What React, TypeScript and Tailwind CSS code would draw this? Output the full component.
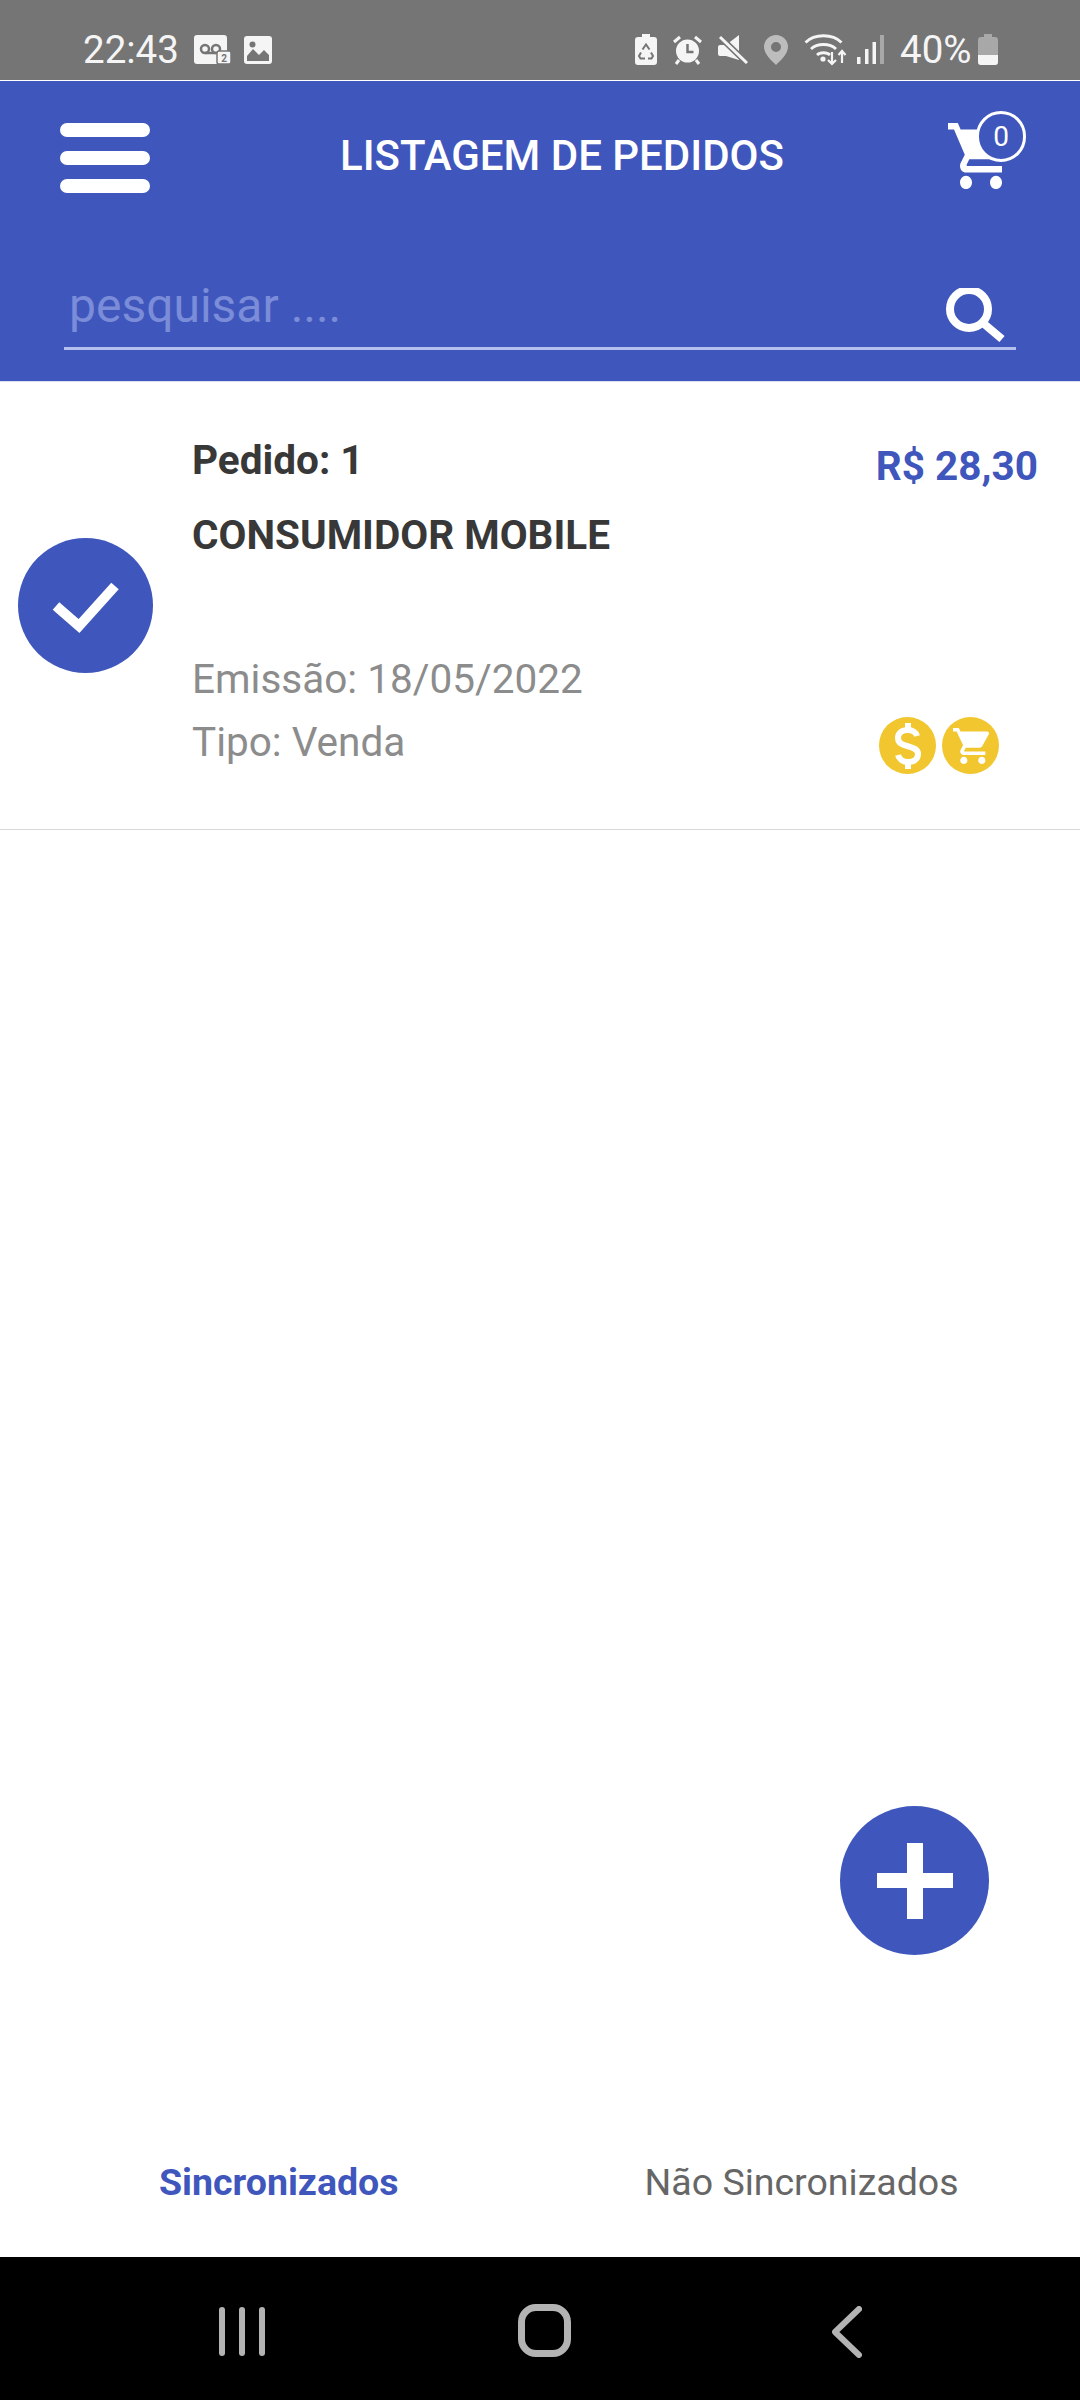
import React from 'react';

const CART_PATH =
  'M7 18c-1.1 0-1.99.9-1.99 2S5.9 22 7 22s2-.9 2-2-.9-2-2-2zM1 2v2h2l3.6 7.59-1.35 2.45c-.16.28-.25.61-.25.96 0 1.1.9 2 2 2h12v-2H7.42c-.14 0-.25-.11-.25-.25l.03-.12.9-1.63h7.45c.75 0 1.41-.41 1.75-1.03l3.58-6.49c.08-.14.12-.31.12-.48 0-.55-.45-1-1-1H5.21l-.94-2H1zm16 16c-1.1 0-1.99.9-1.99 2s.89 2 1.99 2 2-.9 2-2-.9-2-2-2z';

const StatusBar = () => (
  <div className="h-[80px] shrink-0 bg-[#757575] flex items-center pl-[83px] pr-[82px] pt-[19px] text-[#f5f5f5]">
    <span className="text-[38.5px] leading-[40px] font-normal w-[111px]">22:43</span>

    {/* voicemail + badge */}
    <svg width="37" height="29" viewBox="0 0 37 29" className="shrink-0">
      <rect x="0" y="0" width="33" height="29" rx="3" fill="#f5f5f5" />
      <circle cx="11" cy="14" r="4" fill="none" stroke="#757575" strokeWidth="2.5" />
      <circle cx="22" cy="14" r="4" fill="none" stroke="#757575" strokeWidth="2.5" />
      <path d="M11 18h11" stroke="#757575" strokeWidth="2.5" />
      <rect x="23" y="16" width="14" height="13" rx="2" fill="#f5f5f5" stroke="#757575" strokeWidth="1.5" />
      <text x="30" y="27" fontSize="10" fontWeight="700" textAnchor="middle" fill="#757575">2</text>
    </svg>
    <svg width="28" height="28" viewBox="0 0 28 28" className="ml-[13px] shrink-0">
      <rect width="28" height="28" rx="3" fill="#f5f5f5" />
      <circle cx="8.500" cy="8.500" r="3" fill="#757575" />
      <path d="M3 25v-5l6-7 6 6 5-5 5 5v6z" fill="#757575" />
    </svg>

    <div className="ml-auto flex items-center">
      {/* battery care */}
      <svg width="22" height="31" viewBox="0 0 22 31" className="shrink-0">
        <path d="M7 0h8v3h4a3 3 0 0 1 3 3v22a3 3 0 0 1-3 3H3a3 3 0 0 1-3-3V6a3 3 0 0 1 3-3h4z" fill="#f5f5f5" />
        <path d="M7.500 15.500l3.500-5 3.500 5M6 18.500l-2 3.500 1.500 2.500H10M16 18.500l2 3.500-1.500 2.500H13" stroke="#757575" strokeWidth="2" fill="none" />
      </svg>
      {/* alarm */}
      <svg width="29" height="30" viewBox="0 0 29 30" className="ml-[16px] shrink-0">
        <circle cx="14.500" cy="16" r="11.500" fill="#f5f5f5" />
        <path d="M14.500 9v8h6" stroke="#757575" strokeWidth="2.500" fill="none" />
        <path d="M1 7l6-5M28 7l-6-5M6 25l-3 4M23 25l3 4" stroke="#f5f5f5" strokeWidth="3" />
      </svg>
      {/* mute */}
      <svg width="30" height="29" viewBox="0 0 30 29" className="ml-[16px] shrink-0">
        <path d="M0 12a2 2 0 0 1 2-2h6L21 0v25L8 21H2a2 2 0 0 1-2-2z" fill="#f5f5f5" />
        <path d="M0 0l30 29" stroke="#757575" strokeWidth="6" />
        <path d="M2 2l27 26" stroke="#f5f5f5" strokeWidth="3" />
      </svg>
      {/* pin */}
      <svg width="24" height="30" viewBox="0 0 24 30" className="ml-[16px] shrink-0">
        <path
          fillRule="evenodd"
          d="M12 0a12 12 0 0 1 12 12c0 7-8 14-12 18C8 26 0 19 0 12A12 12 0 0 1 12 0zm0 7a5 5 0 1 0 0 10 5 5 0 0 0 0-10z"
          fill="#bdbdbd"
        />
      </svg>
      {/* wifi with arrows */}
      <svg width="43" height="33" viewBox="0 0 43 33" className="ml-[16px] shrink-0">
        <path d="M1.500 9.500c9-9 27-9 36 0M7 16c6-6 19-6 25 0M13 22c3-3 10-3 13 0" fill="none" stroke="#f5f5f5" strokeWidth="2.800" />
        <circle cx="19" cy="26" r="2.600" fill="#f5f5f5" />
        <path d="M28 19v12M24 27l4 4 4-4M38 30V18M34.500 22l3.500-4 3.500 4" fill="none" stroke="#f5f5f5" strokeWidth="2.200" />
      </svg>
      {/* signal */}
      <svg width="27" height="29" viewBox="0 0 27 29" className="ml-[10px] shrink-0">
        <rect x="0" y="22" width="3.500" height="7" fill="#f5f5f5" />
        <rect x="8" y="14" width="3.500" height="15" fill="#f5f5f5" />
        <rect x="15.500" y="7" width="3.500" height="22" fill="#f5f5f5" />
        <rect x="23" y="0" width="4" height="29" fill="#a8a8a8" />
      </svg>
      <span className="ml-[16px] text-[38.5px] leading-[40px] font-normal w-[78px]">40%</span>
      {/* battery */}
      <svg width="20" height="31" viewBox="0 0 20 31" className="shrink-0">
        <path d="M6 0h8v3h3a3 3 0 0 1 3 3v22a3 3 0 0 1-3 3H3a3 3 0 0 1-3-3V6a3 3 0 0 1 3-3h3z" fill="#a8a8a8" />
        <path d="M0 21h20v7a3 3 0 0 1-3 3H3a3 3 0 0 1-3-3z" fill="#f5f5f5" />
      </svg>
    </div>
  </div>
);

const Header = () => (
  <div className="h-[302px] shrink-0 bg-[#3f57bc] border-t border-white border-b border-b-[#d9def2] flex flex-col">
    <div className="h-[155px] flex items-start pl-[60px] pt-[42px]">
      <div className="w-[90px] flex flex-col gap-[14px]">
        <div className="h-[14px] rounded-full bg-white" />
        <div className="h-[14px] rounded-full bg-white" />
        <div className="h-[14px] rounded-full bg-white" />
      </div>
      <h1 className="ml-[190px] w-[450px] mt-[10px] text-[42px] leading-[46px] font-medium text-white whitespace-nowrap">
        LISTAGEM DE PEDIDOS
      </h1>
      <div className="relative ml-[158px]">
        <svg width="60" height="66" viewBox="1 2 20 20" preserveAspectRatio="none" fill="white">
          <path d={CART_PATH} />
        </svg>
        <div className="absolute left-[28px] top-[-12px] w-[50px] h-[51px] rounded-full border-[3px] border-white bg-[#3f57bc] flex items-center justify-center text-white text-[28px] leading-none">
          0
        </div>
      </div>
    </div>
    <div className="ml-[64px] w-[952px] h-[114px] border-b-[3px] border-[#b5c0ee] flex items-start justify-between pt-[35px] pl-[5px] pr-[10px]">
      <span className="text-[48px] leading-[70px] text-[#7b8cd8]">pesquisar ....</span>
      <svg width="60" height="54" viewBox="0 0 60 54" className="mt-[17px] shrink-0">
        <circle cx="23" cy="21" r="19" fill="none" stroke="white" strokeWidth="8" />
        <path d="M37 35l19 16" stroke="white" strokeWidth="8" />
      </svg>
    </div>
  </div>
);

const OrderRow = () => (
  <div className="h-[448px] shrink-0 border-b border-[#d8d8d8] flex items-start pl-[18px] text-[40.5px]">
    <div className="mt-[156px] w-[135px] h-[135px] rounded-full bg-[#3f57bc] flex items-center justify-center shrink-0">
      <svg width="70" height="54" viewBox="0 0 70 54">
        <path d="M5 27l23 20L64 7" fill="none" stroke="white" strokeWidth="10" />
      </svg>
    </div>
    <div className="ml-[39px] flex-1 pt-[50px]">
      <div className="flex justify-between pr-[42px]">
        <span className="font-bold text-[#383838] leading-[56px]">Pedido: 1</span>
        <span className="font-bold text-[#3f57bc] leading-[56px] mt-[6px]">R$ 28,30</span>
      </div>
      <div className="font-bold text-[#383838] leading-[56px] mt-[13px]">CONSUMIDOR MOBILE</div>
      <div className="text-[#8c8c8c] leading-[56px] mt-[88px]">Emissão: 18/05/2022</div>
      <div className="flex justify-between items-start">
        <span className="text-[#8c8c8c] leading-[56px] mt-[7px]">Tipo: Venda</span>
        <div className="flex gap-[6px] mr-[81px] mt-[10px]">
          <div className="w-[57px] h-[57px] rounded-full bg-[#f1c62e] flex items-center justify-center">
            <svg width="30" height="46" viewBox="0 0 30 46">
              <path d="M24 13c-1-4-5-6-9-6-6 0-10 3-10 8 0 11 20 6 20 16 0 5-4 8-10 8-5 0-9-3-10-7" fill="none" stroke="white" strokeWidth="6" />
              <path d="M15 0v46" stroke="white" strokeWidth="6" strokeDasharray="8 30" />
            </svg>
          </div>
          <div className="w-[57px] h-[57px] rounded-full bg-[#f1c62e] flex items-center justify-center">
            <svg width="36" height="36" viewBox="1 2 20 20" fill="white">
              <path d={CART_PATH} />
            </svg>
          </div>
        </div>
      </div>
    </div>
  </div>
);

const NavBar = () => (
  <div className="h-[143px] shrink-0 bg-black flex items-start pt-[47px] pl-[219px]">
    <div className="flex gap-[14px] mt-[3px]">
      <div className="w-[6px] h-[49px] rounded-full bg-[#b3b3b3]" />
      <div className="w-[6px] h-[49px] rounded-full bg-[#b3b3b3]" />
      <div className="w-[6px] h-[49px] rounded-full bg-[#b3b3b3]" />
    </div>
    <div className="ml-[253px] w-[53px] h-[53px] rounded-[18px] border-[7px] border-[#b3b3b3]" />
    <svg width="30" height="52" viewBox="0 0 30 52" className="ml-[261px] mt-[2px]">
      <path d="M27 3L3 26l24 23" fill="none" stroke="#b3b3b3" strokeWidth="6" strokeLinecap="round" strokeLinejoin="round" />
    </svg>
  </div>
);

export default function App() {
  return (
    <div className="relative w-[1080px] h-[2400px] bg-white flex flex-col overflow-hidden font-['Roboto',sans-serif]">
      <StatusBar />
      <Header />
      <OrderRow />
      <div className="flex-1" />

      {/* Tabs */}
      <div className="h-[125px] shrink-0 flex items-start text-[37.5px] leading-[44px]">
        <span className="ml-[159px] font-bold text-[#3f57bc] mt-[28px]">Sincronizados</span>
        <span className="ml-[246px] text-[#666666] mt-[28px]">Não Sincronizados</span>
      </div>

      <NavBar />

      {/* FAB */}
      <button className="absolute left-[840px] top-[1806px] w-[149px] h-[149px] rounded-full bg-[#3f57bc] flex items-center justify-center">
        <svg width="76" height="76" viewBox="0 0 76 76" fill="white">
          <path d="M30 0h16v30h30v15H46v31H30V45H0V30h30z" />
        </svg>
      </button>
    </div>
  );
}
